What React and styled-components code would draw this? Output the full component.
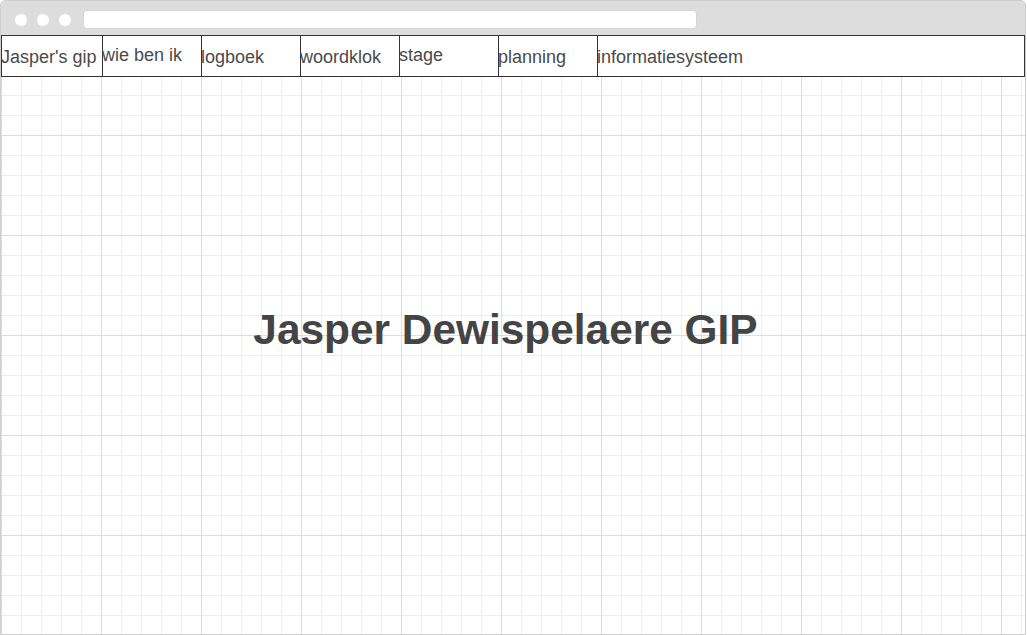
import React from "react";
import styled, { createGlobalStyle } from "styled-components";

const Global = createGlobalStyle`
  html, body { margin: 0; padding: 0; background: #ffffff; }
  body { font-family: "Liberation Sans", Arial, sans-serif; }
  * { box-sizing: border-box; }
`;

const Frame = styled.div`
  width: 1026px;
  height: 635px;
  border: 1px solid #cfcfcf;
  border-radius: 5px 5px 0 0;
  display: flex;
  flex-direction: column;
  overflow: hidden;
  background: #ffffff;
`;

const TitleBar = styled.div`
  height: 34px;
  flex: none;
  background: #dddddd;
  display: flex;
  align-items: center;
  padding: 3px 0 0 13.5px;
  gap: 10px;
`;

const Dot = styled.span`
  width: 12px;
  height: 12px;
  border-radius: 50%;
  background: #ffffff;
  flex: none;
`;

const AddressBar = styled.div`
  width: 614px;
  height: 19px;
  margin-left: 2px;
  background: #ffffff;
  border-radius: 4px;
  border: 1px solid #d6d6d6;
`;

const Viewport = styled.div`
  flex: 1;
  display: flex;
  flex-direction: column;
  background-color: #ffffff;
  background-image:
    linear-gradient(to right, #dddddd 1px, transparent 1px),
    linear-gradient(to bottom, #dddddd 1px, transparent 1px),
    linear-gradient(to right, #eeeeee 1px, transparent 1px),
    linear-gradient(to bottom, #eeeeee 1px, transparent 1px);
  background-size: 100px 100px, 100px 100px, 20px 20px, 20px 20px;
  background-position: 0 0;
`;

const Nav = styled.nav`
  height: 42px;
  flex: none;
  display: flex;
  border: 1px solid #333333;
  background: #ffffff;
`;

const NavItem = styled.a`
  display: block;
  width: ${(p) => (p.$w ? `${p.$w}px` : "auto")};
  flex: ${(p) => (p.$w ? "none" : "1")};
  border-left: ${(p) => (p.$first ? "none" : "1px solid #333333")};
  padding-top: ${(p) => (p.$raised ? 9 : 11)}px;
  text-indent: -1px;
  font-size: 18px;
  color: #4a4a4a;
  text-decoration: none;
  white-space: nowrap;
`;

const Hero = styled.main`
  flex: 1;
  display: flex;
  align-items: center;
  justify-content: center;
  padding: 0 15px 52px 0;
`;

const Title = styled.h1`
  margin: 0;
  font-size: 42.4px;
  font-weight: 700;
  color: #444444;
`;

const items = [
  { label: "Jasper's gip", w: 100, first: true },
  { label: "wie ben ik", w: 99, raised: true },
  { label: "logboek", w: 99 },
  { label: "woordklok", w: 99 },
  { label: "stage", w: 99, raised: true },
  { label: "planning", w: 99 },
  { label: "informatiesysteem" },
];

export default function App() {
  return (
    <>
      <Global />
      <Frame>
        <TitleBar>
          <Dot />
          <Dot />
          <Dot />
          <AddressBar />
        </TitleBar>
        <Viewport>
          <Nav>
            {items.map((it) => (
              <NavItem
                key={it.label}
                href="#"
                $w={it.w}
                $first={it.first}
                $raised={it.raised}
              >
                {it.label}
              </NavItem>
            ))}
          </Nav>
          <Hero>
            <Title>Jasper Dewispelaere GIP</Title>
          </Hero>
        </Viewport>
      </Frame>
    </>
  );
}
